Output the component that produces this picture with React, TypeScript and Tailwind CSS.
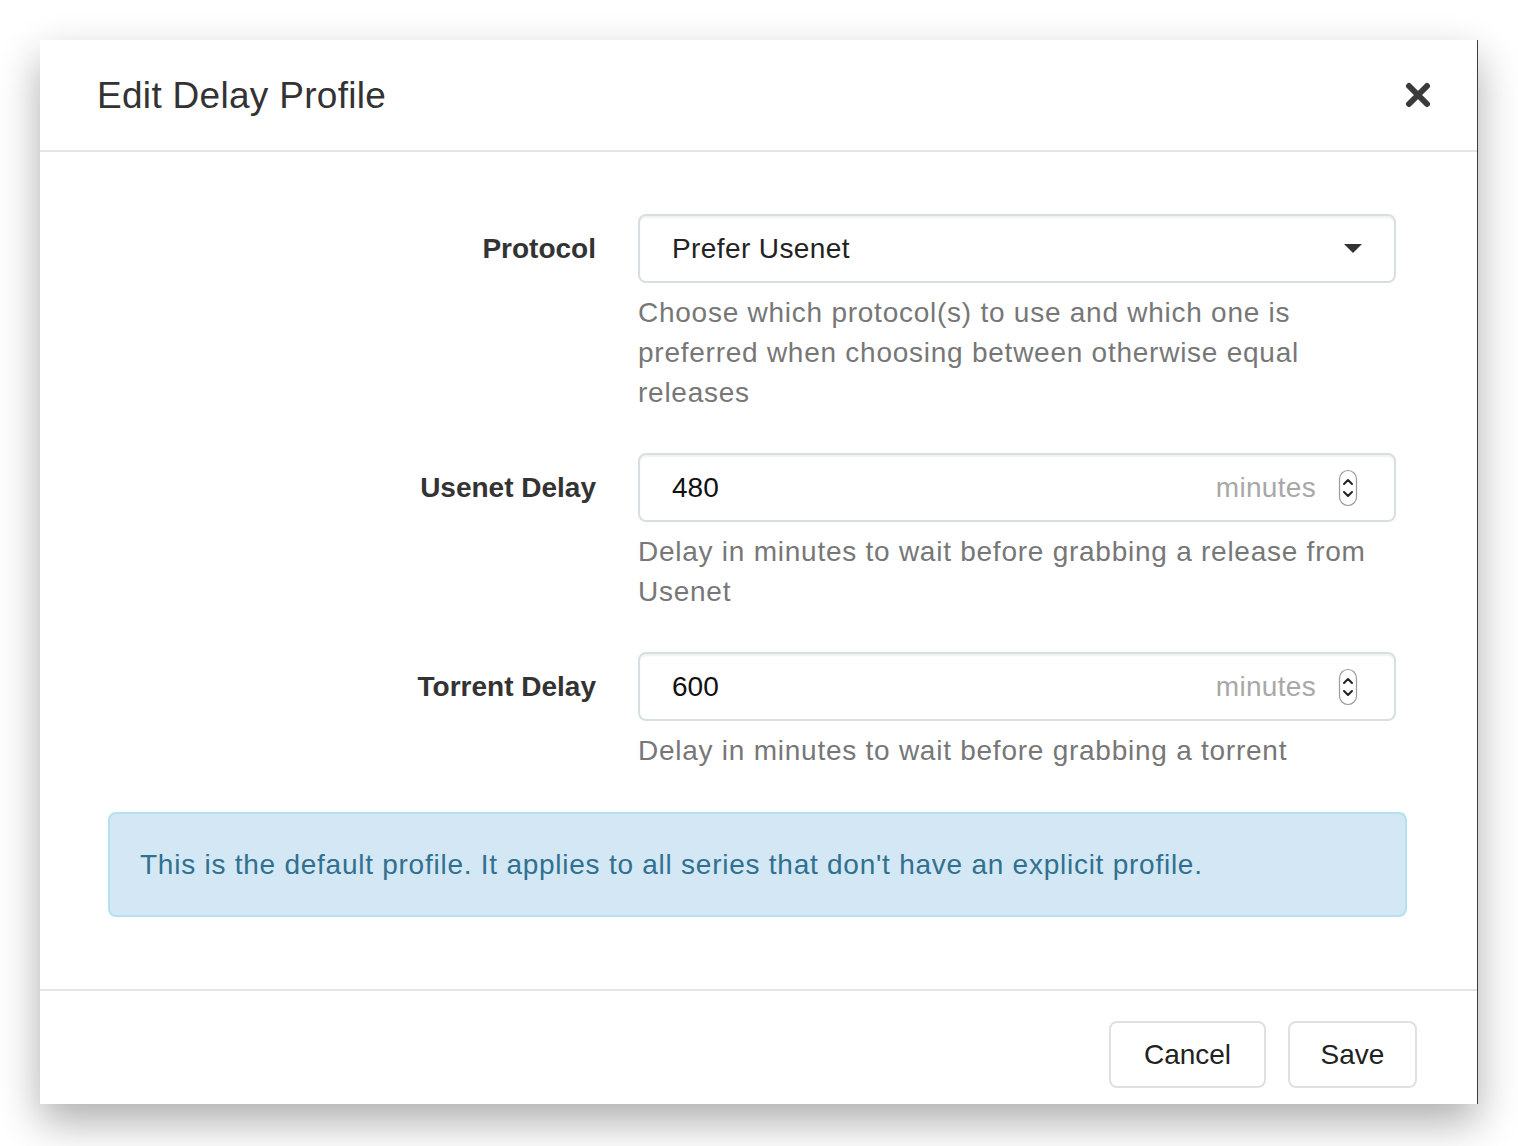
import React from "react";

const font = { fontFamily: '"Liberation Sans", Arial, sans-serif' };

function Spinner() {
  return (
    <svg width="20" height="38" viewBox="0 0 20 38" className="shrink-0">
      <rect x="1.5" y="1.5" width="17" height="35" rx="8.5" fill="#fff" stroke="#9a9a9a" strokeWidth="1.2" />
      <path d="M6 15 L10 11 L14 15" fill="none" stroke="#222" strokeWidth="2" strokeLinecap="round" strokeLinejoin="round" />
      <path d="M6 23 L10 27 L14 23" fill="none" stroke="#222" strokeWidth="2" strokeLinecap="round" strokeLinejoin="round" />
    </svg>
  );
}

function Row({
  label,
  children,
  help,
}: {
  label: string;
  children: React.ReactNode;
  help: React.ReactNode;
}) {
  return (
    <div className="flex">
      <div className="w-[488px] shrink-0 h-[69px] flex items-center justify-end text-[28px] font-bold text-[#333]">
        {label}
      </div>
      <div className="ml-[42px] w-[758px] shrink-0">
        {children}
        <div className="mt-[10px] text-[28px] leading-[40px] text-[#777] tracking-[0.75px]">{help}</div>
      </div>
    </div>
  );
}

function NumberInput({ value }: { value: string }) {
  return (
    <div className="h-[69px] rounded-[8px] border-2 border-[#d8dfe2] shadow-[inset_0_2px_2px_rgba(0,0,0,0.06)] flex items-center pl-[32px] pr-[36px] text-[28px] text-[#111]">
      <span className="flex-1">{value}</span>
      <span className="text-[#a8a8a8] mr-[22px] tracking-[0.3px]">minutes</span>
      <Spinner />
    </div>
  );
}

export default function App() {
  return (
    <div className="min-h-[1146px] bg-white pl-[40px] pt-[40px]" style={font}>
      <div className="w-[1438px] bg-white border-r border-[#3c3c3c] shadow-[0_18px_40px_rgba(0,0,0,0.32)]">
        {/* Header */}
        <div className="h-[112px] border-b-2 border-[#e5e5e5] flex items-center justify-between pl-[57px] pr-[46px]">
          <h4 className="text-[37px] text-[#333] leading-none tracking-[0.3px]">Edit Delay Profile</h4>
          <svg width="26" height="26" viewBox="0 0 26 26">
            <path d="M4 4 L22 22 M22 4 L4 22" stroke="#3a3a3a" strokeWidth="6" strokeLinecap="round" />
          </svg>
        </div>

        {/* Body */}
        <div className="pl-[68px] pt-[62px] pb-[72px]">
          <div className="flex flex-col gap-[40px]">
            <Row
              label="Protocol"
              help={
                <>
                  <div className="whitespace-nowrap">Choose which protocol(s) to use and which one is</div>
                  <div className="whitespace-nowrap">preferred when choosing between otherwise equal</div>
                  <div className="whitespace-nowrap">releases</div>
                </>
              }
            >
              <div className="h-[69px] rounded-[8px] border-2 border-[#d8dfe2] shadow-[inset_0_2px_2px_rgba(0,0,0,0.06)] flex items-center justify-between pl-[32px] pr-[32px] text-[28px] text-[#222]">
                <span className="tracking-[0.4px]">Prefer Usenet</span>
                <svg width="18" height="10" viewBox="0 0 18 10">
                  <path d="M0 0 L18 0 L9 9 Z" fill="#333" />
                </svg>
              </div>
            </Row>
            <Row
              label="Usenet Delay"
              help={
                <>
                  <div className="whitespace-nowrap">Delay in minutes to wait before grabbing a release from</div>
                  <div className="whitespace-nowrap">Usenet</div>
                </>
              }
            >
              <NumberInput value="480" />
            </Row>
            <Row
              label="Torrent Delay"
              help={<div className="whitespace-nowrap">Delay in minutes to wait before grabbing a torrent</div>}
            >
              <NumberInput value="600" />
            </Row>
          </div>
          <div className="mt-[41px] w-[1299px] h-[105px] rounded-[8px] border-2 border-[#b5e0ee] bg-[#d3e8f4] flex items-center pl-[30px] text-[28px] text-[#31708f] tracking-[0.75px]">
            This is the default profile. It applies to all series that don't have an explicit profile.
          </div>
        </div>

        {/* Footer */}
        <div className="h-[115px] border-t-2 border-[#e5e5e5] flex justify-end items-start pt-[30px] pr-[60px] gap-[22px]">
          <button className="w-[157px] h-[67px] rounded-[8px] border-2 border-[#e0e0e0] bg-white text-[28px] text-[#222]">
            Cancel
          </button>
          <button className="w-[129px] h-[67px] rounded-[8px] border-2 border-[#e0e0e0] bg-white text-[28px] text-[#222]">
            Save
          </button>
        </div>
      </div>
    </div>
  );
}
